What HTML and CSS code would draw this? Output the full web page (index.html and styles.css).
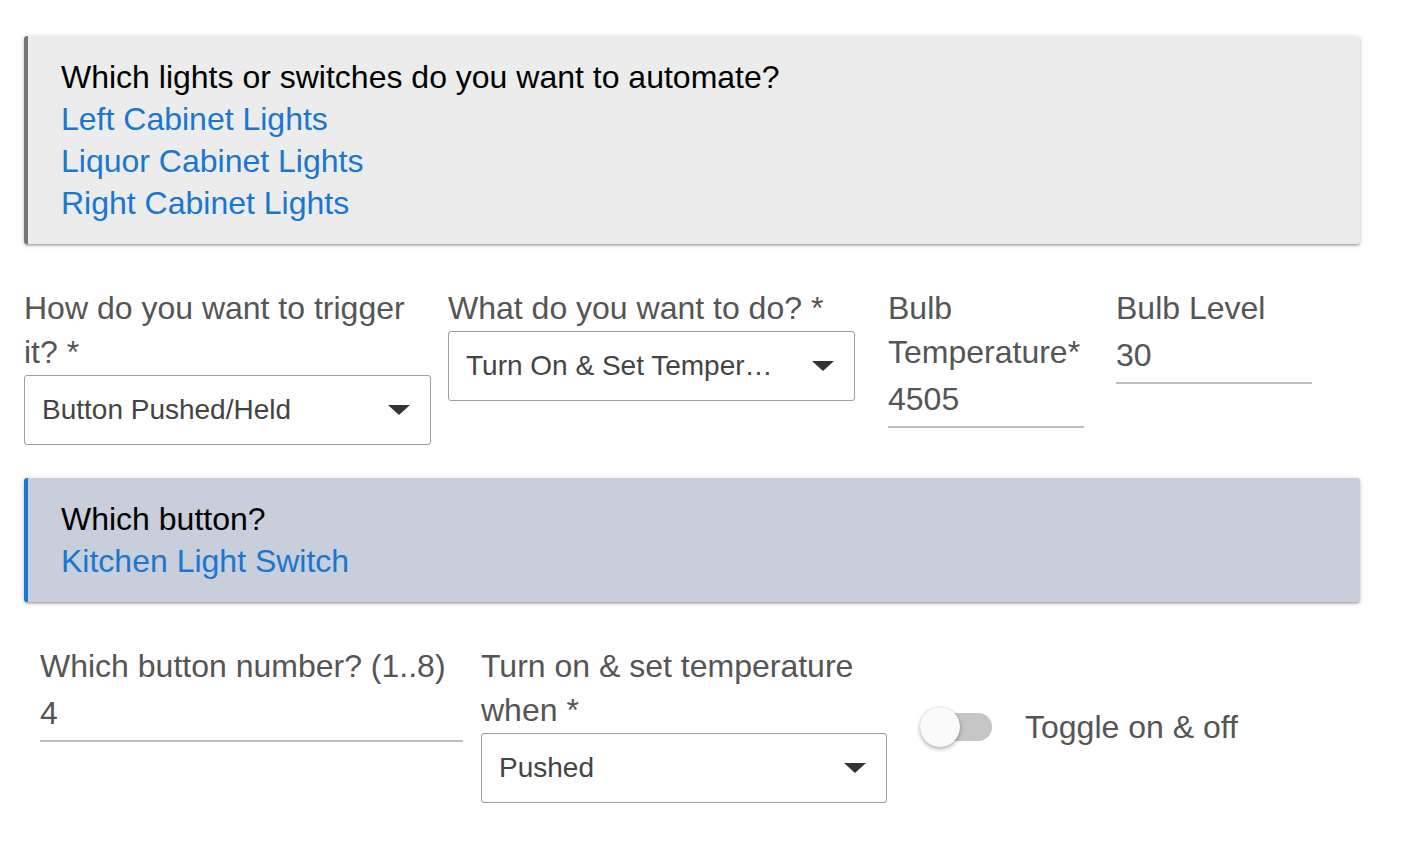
FILE: index.html
```html
<!DOCTYPE html>
<html>
<head>
<meta charset="utf-8">
<link rel="stylesheet" href="styles.css">
</head>
<body>
<div class="page">
  <div class="card card-grey">
    <div class="card-title">Which lights or switches do you want to automate?</div>
    <a class="card-link">Left Cabinet Lights</a>
    <a class="card-link">Liquor Cabinet Lights</a>
    <a class="card-link">Right Cabinet Lights</a>
  </div>

  <div class="row row-top">
    <div class="field f-select1">
      <div class="label">How do you want to trigger it? *</div>
      <div class="select"><span class="select-text">Button Pushed/Held</span><span class="arrow"></span></div>
    </div>
    <div class="field f-select2">
      <div class="label">What do you want to do? *</div>
      <div class="select"><span class="select-text">Turn On &amp; Set Temperature</span><span class="arrow"></span></div>
    </div>
    <div class="field f-input1">
      <div class="label">Bulb Temperature*</div>
      <div class="input">4505</div>
    </div>
    <div class="field f-input2">
      <div class="label">Bulb Level</div>
      <div class="input">30</div>
    </div>
  </div>

  <div class="card card-blue">
    <div class="card-title">Which button?</div>
    <a class="card-link">Kitchen Light Switch</a>
  </div>

  <div class="row row-bottom">
    <div class="field f-num">
      <div class="label">Which button number? (1..8)</div>
      <div class="input">4</div>
    </div>
    <div class="field f-when">
      <div class="label">Turn on &amp; set temperature when *</div>
      <div class="select"><span class="select-text">Pushed</span><span class="arrow"></span></div>
    </div>
    <div class="toggle-field">
      <div class="switch"><span class="track"></span><span class="knob"></span></div>
      <span class="toggle-label">Toggle on &amp; off</span>
    </div>
  </div>
</div>
</body>
</html>
```

FILE: styles.css
```css
html, body {
  margin: 0;
  padding: 0;
  background: #ffffff;
}
body {
  font-family: "Liberation Sans", Arial, sans-serif;
}
.page {
  padding: 36px 0 0 24px;
  width: 1336px;
}
.card {
  border-radius: 3px;
  padding: 20px 20px 20px 33px;
  box-shadow: 0 2px 2px 0 rgba(0,0,0,0.14), 0 3px 1px -2px rgba(0,0,0,0.12), 0 1px 5px 0 rgba(0,0,0,0.2);
}
.card-grey {
  background: #ececec;
  border-left: 4px solid #767676;
}
.card-blue {
  background: #c8ceda;
  border-left: 4px solid #1976d2;
}
.card-title {
  font-size: 32px;
  line-height: 42px;
  color: #000;
}
.card-link {
  display: block;
  font-size: 32px;
  line-height: 42px;
  color: #1976d2;
}
.row {
  display: flex;
  align-items: flex-start;
}
.row-top {
  margin-top: 42px;
  margin-bottom: 33px;
}
.row-bottom {
  margin-top: 42px;
  padding-left: 16px;
}
.label {
  font-size: 32px;
  line-height: 44px;
  color: #555;
}
.f-select1 { width: 407px; margin-right: 17px; }
.f-select2 { width: 407px; margin-right: 33px; }
.f-input1 { width: 196px; margin-right: 32px; }
.f-input2 { width: 196px; }
.f-num { width: 423px; margin-right: 18px; }
.f-when { width: 406px; margin-right: 33px; }
.select {
  box-sizing: border-box;
  height: 70px;
  border: 1.5px solid #9e9e9e;
  border-radius: 3px;
  display: flex;
  align-items: center;
  padding: 0 20px 0 17px;
  margin-top: 1px;
}
.select-text {
  flex: 1;
  font-size: 28px;
  color: #444;
  white-space: nowrap;
  overflow: hidden;
  text-overflow: ellipsis;
  padding-right: 36px;
}
.arrow {
  width: 0;
  height: 0;
  border-left: 11px solid transparent;
  border-right: 11px solid transparent;
  border-top: 10px solid #333;
}
.input {
  box-sizing: border-box;
  height: 54px;
  font-size: 32px;
  line-height: 50px;
  color: #555;
  border-bottom: 2px solid #bdbdbd;
}
.toggle-field {
  display: flex;
  align-items: center;
  margin-top: 63px;
}
.switch {
  position: relative;
  width: 72px;
  height: 40px;
  margin-right: 33px;
}
.track {
  position: absolute;
  left: 8px;
  top: 6px;
  width: 64px;
  height: 28px;
  border-radius: 14px;
  background: #c6c6c6;
}
.knob {
  position: absolute;
  left: 0;
  top: 0;
  width: 40px;
  height: 40px;
  border-radius: 50%;
  background: #fafafa;
  box-shadow: 0 2px 4px rgba(0,0,0,0.3), 0 0 1px rgba(0,0,0,0.2);
}
.toggle-label {
  font-size: 32px;
  color: #555;
}
```
